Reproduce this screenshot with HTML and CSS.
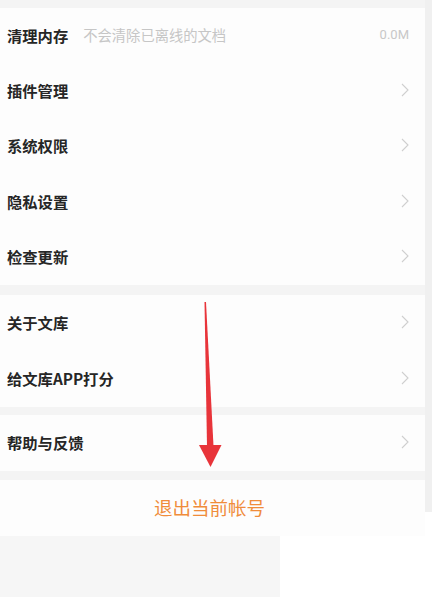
FILE: index.html
```html
<!DOCTYPE html>
<html lang="zh-CN">
<head>
<meta charset="utf-8">
<title>设置</title>
<link rel="stylesheet" href="styles.css">
</head>
<body>
<div class="page">
  <div class="top">
    <div class="main">
      <div class="card card-first">
        <div class="row">
          <span class="title">清理内存</span>
          <span class="sub">不会清除已离线的文档</span>
          <span class="value">0.0M</span>
        </div>
        <div class="row"><span class="title">插件管理</span><svg class="chev" viewBox="0 0 8 14"><path d="M1 1 L7 7 L1 13"/></svg></div>
        <div class="row"><span class="title">系统权限</span><svg class="chev" viewBox="0 0 8 14"><path d="M1 1 L7 7 L1 13"/></svg></div>
        <div class="row"><span class="title">隐私设置</span><svg class="chev" viewBox="0 0 8 14"><path d="M1 1 L7 7 L1 13"/></svg></div>
        <div class="row"><span class="title">检查更新</span><svg class="chev" viewBox="0 0 8 14"><path d="M1 1 L7 7 L1 13"/></svg></div>
      </div>
      <div class="card card-second">
        <div class="row"><span class="title">关于文库</span><svg class="chev" viewBox="0 0 8 14"><path d="M1 1 L7 7 L1 13"/></svg></div>
        <div class="row"><span class="title">给文库APP打分</span><svg class="chev" viewBox="0 0 8 14"><path d="M1 1 L7 7 L1 13"/></svg></div>
      </div>
      <div class="card card-third">
        <div class="row"><span class="title">帮助与反馈</span><svg class="chev" viewBox="0 0 8 14"><path d="M1 1 L7 7 L1 13"/></svg></div>
      </div>
      <div class="logout">退出当前帐号</div>
    </div>
    <div class="strip"></div>
  </div>
  <div class="bottom">
    <div class="bottom-left"></div>
  </div>
  <svg class="arrow" viewBox="0 0 432 597" width="432" height="597">
    <polygon class="arrow-shaft" points="204.5,302 206,302 213.5,446 207,446"/>
    <polygon class="arrow-head" points="199,445 221.5,445 210.5,467"/>
  </svg>
</div>
</body>
</html>
```

FILE: styles.css
```css
* { box-sizing: border-box; }
html, body { margin: 0; padding: 0; }
body {
  background: #ffffff;
  font-family: "Noto Sans CJK SC", "Noto Sans", sans-serif;
  width: 432px;
  height: 597px;
  overflow: hidden;
}
.page { position: relative; width: 432px; height: 597px; }
.top { display: flex; align-items: flex-start; }
.main {
  width: 425px;
  background: #f4f4f4;
  padding-top: 8px;
  display: flex;
  flex-direction: column;
}
.strip { width: 7px; height: 512px; background: #f0f0f0; }
.card { background: #fdfdfd; }
.card-first { margin-bottom: 10px; }
.card-first .row { height: 55.4px; }
.card-second { margin-bottom: 8px; }
.card-third { margin-bottom: 9px; }
.row {
  height: 56px;
  display: flex;
  align-items: center;
  padding: 0 16px 2px 7px;
}
.title {
  font-size: 15.3px;
  font-weight: 700;
  color: #262626;
}
.sub {
  font-size: 14.3px;
  color: #c6c6c6;
  margin-left: 15px;
}
.value {
  margin-left: auto;
  font-size: 13px;
  color: #c8c8c8;
  font-family: "Roboto", "Noto Sans", sans-serif;
}
.chev {
  margin-left: auto;
  width: 8px;
  height: 14px;
}
.chev path { fill: none; stroke: #cfcfcf; stroke-width: 1.1; }
.logout {
  height: 56px;
  background: #fdfdfd;
  display: flex;
  align-items: center;
  justify-content: center;
  padding: 0 6px 2px 0;
  font-size: 18.5px;
  color: #f08c3a;
}
.bottom { display: flex; height: 61px; }
.bottom-left { width: 280px; background: #f6f6f6; }
.arrow { position: absolute; left: 0; top: 0; pointer-events: none; }
.arrow-shaft, .arrow-head { fill: #e8343a; }
```
